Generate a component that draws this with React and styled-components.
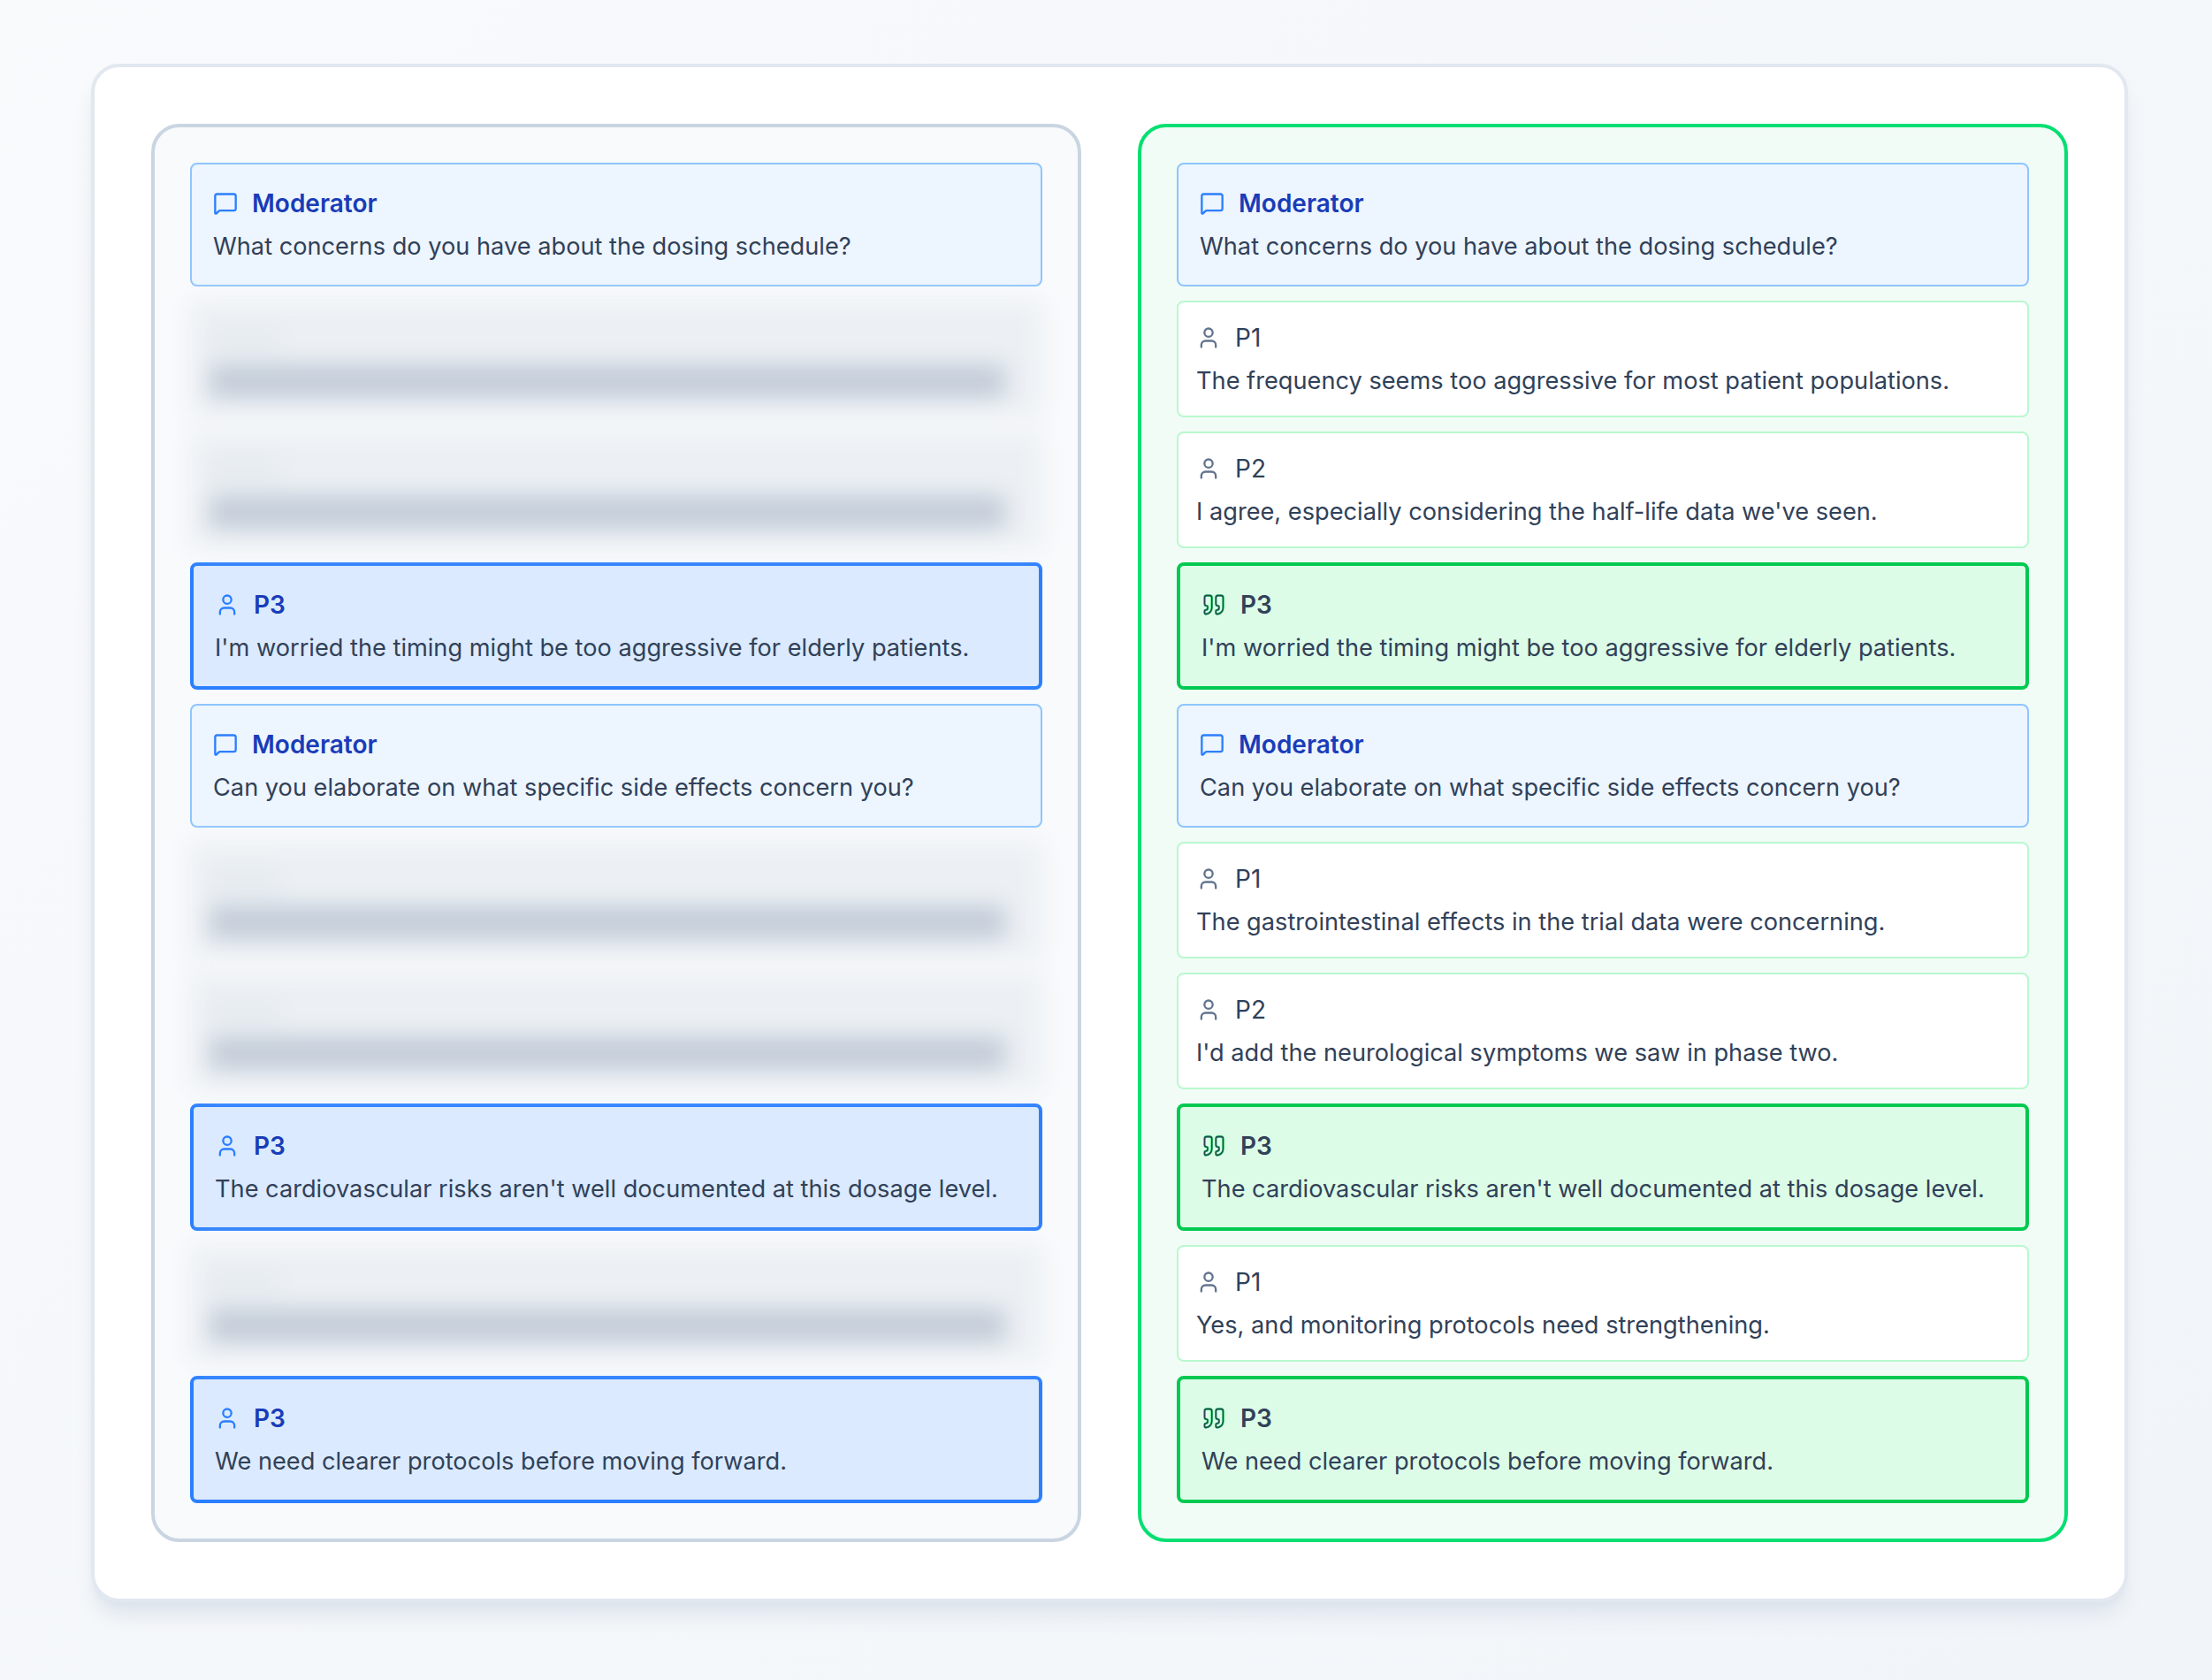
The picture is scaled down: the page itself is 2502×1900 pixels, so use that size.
import { MessageSquare, User } from "lucide-react";
import styled, { createGlobalStyle, css } from "styled-components";

const GlobalStyle = createGlobalStyle`
  * {
    box-sizing: border-box;
  }
  body {
    margin: 0;
    font-family: Inter, "Liberation Sans", sans-serif;
  }
`;

const Page = styled.div`
  min-height: 1900px;
  padding: 72px 0 0 103px;
  background: linear-gradient(135deg, #f8fafc, #f1f5f9);
`;

const Card = styled.div`
  width: 2304px;
  padding: 64px;
  display: grid;
  grid-template-columns: 1fr 1fr;
  gap: 64px;
  background: #fff;
  border: 4px solid #e2e8f0;
  border-radius: 32px;
  box-shadow: 0 20px 25px -5px #dfe5ed, 0 8px 10px -6px #cfd8e3;
`;

const Panel = styled.div`
  display: flex;
  flex-direction: column;
  gap: 16px;
  padding: 40px;
  border-radius: 32px;
  border: 4px solid ${(p) => (p.$green ? "#05df72" : "#cad5e2")};
  background: ${(p) => (p.$green ? "#f2fcf6" : "#f8fafc")};
`;

const kinds = {
  moderator: css`
    padding: 24px;
    background: #edf5fe;
    border: 2px solid #8ec5ff;
  `,
  participant: css`
    padding: 20px;
    background: #fff;
    border: 2px solid #b9f8cf;
  `,
  targetBlue: css`
    padding: 24px;
    background: #dbeafe;
    border: 4px solid #2b7fff;
  `,
  targetGreen: css`
    padding: 24px;
    background: #dcfce7;
    border: 4px solid #00c950;
  `,
};

const Message = styled.div`
  border-radius: 8px;
  ${(p) => kinds[p.$kind]}
`;

const Header = styled.div`
  display: flex;
  align-items: center;
  gap: 16px;
  height: 40px;
  margin-bottom: 8px;
  color: ${(p) => p.$color};
  font-size: 28px;
  font-weight: ${(p) => p.$weight};
  line-height: 40px;
`;

const Body = styled.div`
  height: 40px;
  color: #314158;
  font-size: 27.2px;
  line-height: 42px;
  white-space: nowrap;
`;

const BlurredRow = styled.div`
  height: 132px;
  padding: 22px 22px 0;
  border-radius: 8px;
  background: #ecf0f4;
  filter: blur(13px);
`;

const BlurredName = styled.div`
  width: 80px;
  height: 28px;
  margin: 8px 0 14px;
  background: #e6ebf0;
`;

const BlurredText = styled.div`
  width: 900px;
  height: 38px;
  border-radius: 4px;
  background: #c3ccd8;
`;

const QuoteShape = styled.svg`
  flex: none;
  fill: none;
  stroke-linecap: round;
  stroke-linejoin: round;
`;

const quotePaths = [
  "M16 3a2 2 0 0 0-2 2v6a2 2 0 0 0 2 2 1 1 0 0 1 1 1v1a2 2 0 0 1-2 2 1 1 0 0 0-1 1v2a1 1 0 0 0 1 1 6 6 0 0 0 6-6V5a2 2 0 0 0-2-2z",
  "M5 3a2 2 0 0 0-2 2v6a2 2 0 0 0 2 2 1 1 0 0 1 1 1v1a2 2 0 0 1-2 2 1 1 0 0 0-1 1v2a1 1 0 0 0 1 1 6 6 0 0 0 6-6V5a2 2 0 0 0-2-2z",
];

function QuoteIcon() {
  return (
    <QuoteShape width="28" height="28" viewBox="0 0 24 24">
      {quotePaths.map((d) => (
        <path key={d} d={d} stroke="#00c950" strokeWidth="2" />
      ))}
      {quotePaths.map((d) => (
        <path key={d} d={d} stroke="#314158" strokeWidth="1.1" />
      ))}
    </QuoteShape>
  );
}

const script = [
  { who: "Moderator", text: "What concerns do you have about the dosing schedule?" },
  { who: "P1", text: "The frequency seems too aggressive for most patient populations." },
  { who: "P2", text: "I agree, especially considering the half-life data we've seen." },
  { who: "P3", text: "I'm worried the timing might be too aggressive for elderly patients." },
  { who: "Moderator", text: "Can you elaborate on what specific side effects concern you?" },
  { who: "P1", text: "The gastrointestinal effects in the trial data were concerning." },
  { who: "P2", text: "I'd add the neurological symptoms we saw in phase two." },
  { who: "P3", text: "The cardiovascular risks aren't well documented at this dosage level." },
  { who: "P1", text: "Yes, and monitoring protocols need strengthening." },
  { who: "P3", text: "We need clearer protocols before moving forward." },
];

function Line({ who, text, green }) {
  if (who === "Moderator") {
    return (
      <Message $kind="moderator">
        <Header $color="#193cb8" $weight={600}>
          <MessageSquare size={28} color="#2b7fff" />
          {who}
        </Header>
        <Body>{text}</Body>
      </Message>
    );
  }
  if (who === "P3") {
    return (
      <Message $kind={green ? "targetGreen" : "targetBlue"}>
        <Header $color={green ? "#314158" : "#193cb8"} $weight={600}>
          {green ? <QuoteIcon /> : <User size={28} color="#2b7fff" />}
          {who}
        </Header>
        <Body>{text}</Body>
      </Message>
    );
  }
  return (
    <Message $kind="participant">
      <Header $color="#314158" $weight={400}>
        <User size={28} color="#62748e" />
        {who}
      </Header>
      <Body>{text}</Body>
    </Message>
  );
}

export default function App() {
  return (
    <>
      <GlobalStyle />
      <Page>
        <Card>
          <Panel>
            {script.map((line) =>
              line.who === "P1" || line.who === "P2" ? (
                <BlurredRow key={line.text}>
                  <BlurredName />
                  <BlurredText />
                </BlurredRow>
              ) : (
                <Line key={line.text} {...line} />
              )
            )}
          </Panel>
          <Panel $green>
            {script.map((line) => (
              <Line key={line.text} {...line} green />
            ))}
          </Panel>
        </Card>
      </Page>
    </>
  );
}
